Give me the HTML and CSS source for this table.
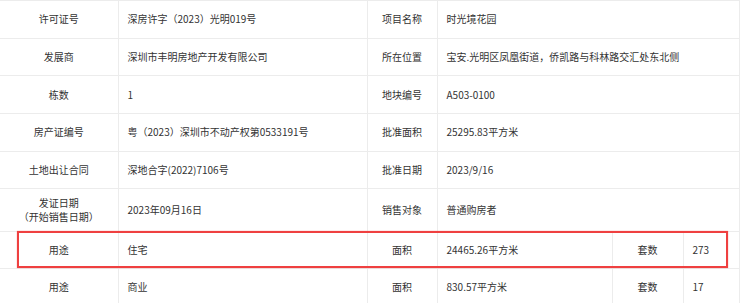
FILE: index.html
```html
<!DOCTYPE html>
<html lang="zh-CN">
<head>
<meta charset="utf-8">
<title>项目信息</title>
<link rel="stylesheet" href="styles.css">
</head>
<body>
<div class="wrap">
  <table class="info">
    <colgroup>
      <col class="c1"><col class="c2"><col class="c3"><col class="c4"><col class="c5"><col class="c6">
    </colgroup>
    <tr class="r">
      <td class="lbl">许可证号</td><td class="val">深房许字（2023）光明019号</td>
      <td class="lbl">项目名称</td><td class="val" colspan="3">时光境花园</td>
    </tr>
    <tr class="r">
      <td class="lbl">发展商</td><td class="val">深圳市丰明房地产开发有限公司</td>
      <td class="lbl">所在位置</td><td class="val" colspan="3">宝安.光明区凤凰街道，侨凯路与科林路交汇处东北侧</td>
    </tr>
    <tr class="r">
      <td class="lbl">栋数</td><td class="val">1</td>
      <td class="lbl">地块编号</td><td class="val" colspan="3">A503-0100</td>
    </tr>
    <tr class="r">
      <td class="lbl">房产证编号</td><td class="val">粤（2023）深圳市不动产权第0533191号</td>
      <td class="lbl">批准面积</td><td class="val" colspan="3">25295.83平方米</td>
    </tr>
    <tr class="r">
      <td class="lbl">土地出让合同</td><td class="val">深地合字(2022)7106号</td>
      <td class="lbl">批准日期</td><td class="val" colspan="3">2023/9/16</td>
    </tr>
    <tr class="r2">
      <td class="lbl">发证日期<br>（开始销售日期）</td><td class="val">2023年09月16日</td>
      <td class="lbl">销售对象</td><td class="val" colspan="3">普通购房者</td>
    </tr>
    <tr class="r3">
      <td class="lbl">用途</td><td class="val">住宅</td>
      <td class="lbl">面积</td><td class="val">24465.26平方米</td>
      <td class="lbl">套数</td><td class="val">273</td>
    </tr>
    <tr class="r3">
      <td class="lbl">用途</td><td class="val">商业</td>
      <td class="lbl">面积</td><td class="val">830.57平方米</td>
      <td class="lbl">套数</td><td class="val">17</td>
    </tr>
  </table>
  <div class="mark"></div>
</div>
</body>
</html>
```

FILE: styles.css
```css
html, body {
  margin: 0;
  padding: 0;
  background: #fff;
}

.wrap {
  position: relative;
  width: 740px;
}

.info {
  border-collapse: collapse;
  table-layout: fixed;
  width: 739px;
  font-family: "Noto Sans CJK SC", "Microsoft YaHei", sans-serif;
  font-size: 10px;
  color: #333;
  border-top: 1px solid #e6e6e6;
}

.c1 { width: 118px; }
.c2 { width: 249px; }
.c3 { width: 70px; }
.c4 { width: 175px; }
.c5 { width: 71px; }
.c6 { width: 56px; }

.info td {
  border: 1px solid #ececec;
  padding: 0 8px;
  line-height: 14px;
  vertical-align: middle;
  white-space: nowrap;
}

.info tr td:first-child {
  border-left: none;
}

.info td.lbl {
  text-align: center;
  padding: 0;
}

.info td.val {
  text-align: left;
  padding-left: 9px;
}

.r { height: 37.7px; }
.r2 { height: 43px; }
.r3 { height: 36.6px; }

.mark {
  position: absolute;
  left: 17px;
  top: 231px;
  width: 707px;
  height: 33px;
  border: 2px solid #ef4040;
  box-shadow: 0 0 1px rgba(239, 64, 64, 0.6);
}
```
